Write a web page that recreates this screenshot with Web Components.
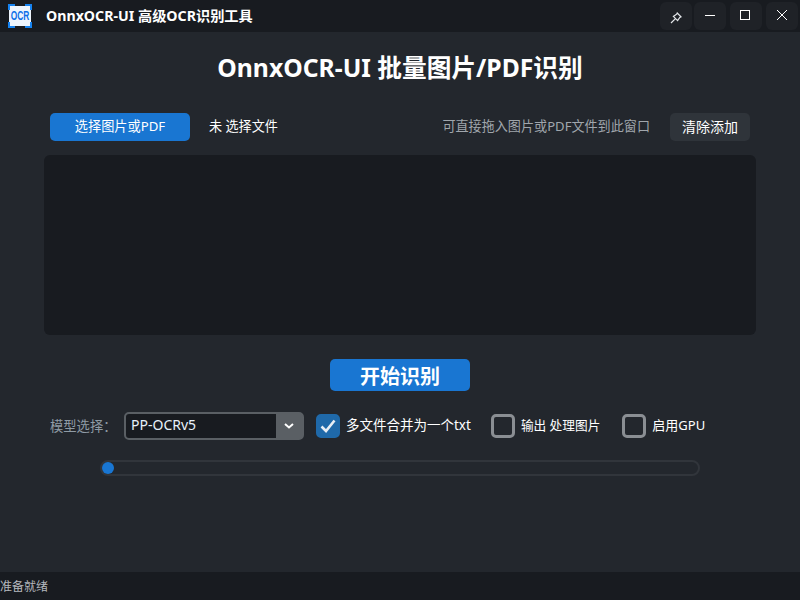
<!DOCTYPE html>
<html lang="zh">
<head>
<meta charset="utf-8">
<title>OnnxOCR-UI</title>
<style>
  html, body { margin: 0; height: 100%; }
  body {
    background: #23272d;
    color: #fff;
    font-family: "Noto Sans", "Noto Sans CJK SC", sans-serif;
    overflow: hidden;
  }
  ocr-app { height: 600px; }
</style>
</head>
<body>
<ocr-app></ocr-app>
<script>
class AppButton extends HTMLElement {
  constructor() {
    super();
    this.attachShadow({ mode: "open" }).innerHTML = `
      <style>
        :host { display: flex; align-items: center; justify-content: center; height: 28px; border-radius: 5px;
                box-sizing: border-box; padding-bottom: 4px; font-size: 13.2px; color: #fff; cursor: pointer; background: #1976d2; }
        :host([kind="flat"]) { background: #2f343a; font-size: 14px; padding-bottom: 3px; }
        :host([kind="big"]) { height: 32px; padding-bottom: 0; font-size: 20px; font-weight: 700; }
      </style>
      <slot></slot>`;
  }
}
customElements.define("app-button", AppButton);

class WinButton extends HTMLElement {
  constructor() {
    super();
    this.attachShadow({ mode: "open" }).innerHTML = `
      <style>
        :host { display: flex; align-items: center; justify-content: center; width: 32px; height: 28px;
                box-sizing: border-box; padding-bottom: 2px; border-radius: 6px; background: #1f2227; }
        ::slotted(svg) { display: block; }
      </style>
      <slot></slot>`;
  }
}
customElements.define("win-button", WinButton);

class TitleBar extends HTMLElement {
  constructor() {
    super();
    this.attachShadow({ mode: "open" }).innerHTML = `
      <style>
        :host { display: flex; align-items: center; height: 32px; background: #181b20; flex: none; }
        .logo { margin-left: 8px; width: 24px; height: 24px; flex: none; display: block; position: relative; }
        .logo-text { position: absolute; left: 1px; top: 2px; width: 22px; height: 20px; background: #eef5fd; color: #0f6fe8;
                     display: flex; align-items: center; justify-content: center; overflow: hidden; }
        .logo-text span { font: 700 13.5px/20px "Liberation Sans", sans-serif; transform: scaleX(.62); white-space: nowrap; }
        .logo svg { position: absolute; left: 0; top: 0; z-index: 1; }
        .name { margin-left: 14px; font-size: 14.2px; font-weight: 700; flex: 1; white-space: nowrap; line-height: 32px; }
        .btns { display: flex; gap: 4px; margin-right: 2px; }
        .btns win-button:first-child { margin-right: -2px; }
      </style>
      <div class="logo">
        <div class="logo-text"><span>OCR</span></div>
        <svg width="24" height="24" viewBox="0 0 24 24" fill="none" stroke="#1683f0" stroke-width="2">
          <path d="M1 6V1H7M17 1H23V6M23 18V23H17M7 23H1V18"/>
        </svg>
      </div>
      <div class="name">OnnxOCR-UI 高级OCR识别工具</div>
      <div class="btns">
        <win-button><svg style="margin-top:6px" width="12" height="12" viewBox="0 0 12 12" fill="none" stroke="#e4e7ea" stroke-width="1.2"><path d="M7.2 1 L11 4.8 L9.8 5.4 L7.6 8.6 L3.4 4.4 L6.6 2.2 Z M5.2 6.8 L1 11"/></svg></win-button>
        <win-button><svg width="10" height="1" viewBox="0 0 10 1"><rect width="10" height="1" fill="#fff"/></svg></win-button>
        <win-button><svg style="margin-right:2px" width="10" height="10" viewBox="0 0 10 10" fill="none" stroke="#fff"><rect x=".5" y=".5" width="9" height="9"/></svg></win-button>
        <win-button><svg width="10" height="10" viewBox="0 0 10 10" stroke="#fff" stroke-width="1"><path d="M0 0L10 10M10 0L0 10"/></svg></win-button>
      </div>`;
  }
}
customElements.define("title-bar", TitleBar);

class FileRow extends HTMLElement {
  constructor() {
    super();
    this.attachShadow({ mode: "open" }).innerHTML = `
      <style>
        :host { display: flex; align-items: center; padding: 0 6px; height: 28px; font-size: 13.1px; }
        .pick { width: 140px; }
        .none { margin: 0 0 4px 19px; flex: 1; }
        .hint { color: #a0a6ac; margin: 0 20px 4px 0; }
        .clear { width: 80px; }
      </style>
      <app-button class="pick">选择图片或PDF</app-button>
      <span class="none">未 选择文件</span>
      <span class="hint">可直接拖入图片或PDF文件到此窗口</span>
      <app-button class="clear" kind="flat">清除添加</app-button>`;
  }
}
customElements.define("file-row", FileRow);

class DropArea extends HTMLElement {
  constructor() {
    super();
    this.attachShadow({ mode: "open" }).innerHTML = `
      <style>
        :host { display: block; height: 180px; background: #181b20; border-radius: 6px; margin-top: 14px; }
      </style>`;
  }
}
customElements.define("drop-area", DropArea);

class ModelSelect extends HTMLElement {
  constructor() {
    super();
    this.attachShadow({ mode: "open" }).innerHTML = `
      <style>
        :host { display: flex; width: 180px; height: 28px; box-sizing: border-box; border: 2px solid #5a5f64;
                border-radius: 5px; background: #181b20; font-size: 14px; color: #e8f2fb; flex: none; }
        .val { flex: 1; padding-left: 5px; line-height: 22px; }
        .arrow { width: 26px; background: #5a5f64; display: flex; align-items: center; justify-content: center; }
      </style>
      <span class="val"><slot></slot></span>
      <span class="arrow">
        <svg width="10" height="6" viewBox="0 0 10 6" fill="none" stroke="#fff" stroke-width="2"><path d="M1 1L5 4.5L9 1"/></svg>
      </span>`;
  }
}
customElements.define("model-select", ModelSelect);

class CheckOption extends HTMLElement {
  constructor() {
    super();
    this.attachShadow({ mode: "open" }).innerHTML = `
      <style>
        :host { display: flex; align-items: center; gap: 6px; font-size: var(--check-size, 13.5px); white-space: nowrap; }
        .box { width: 24px; height: 24px; box-sizing: border-box; border: 3px solid #8a8e93; border-radius: 5px; flex: none;
               display: flex; align-items: center; justify-content: center; }
        .txt { margin-bottom: 4px; }
        svg { display: none; }
        :host([checked]) .box { background: #1f69a9; border-color: #1f69a9; }
        :host([checked]) svg { display: block; }
      </style>
      <span class="box">
        <svg width="16" height="14" viewBox="0 0 16 14" fill="none" stroke="#e8eef4" stroke-width="2.6"><path d="M1.5 7.5L6 12L14.5 1.5"/></svg>
      </span>
      <span class="txt"><slot></slot></span>`;
  }
}
customElements.define("check-option", CheckOption);

class ProgressTrack extends HTMLElement {
  constructor() {
    super();
    this.attachShadow({ mode: "open" }).innerHTML = `
      <style>
        :host { display: block; width: 600px; height: 16px; box-sizing: border-box; border: 2px solid #31353b;
                border-radius: 8px; margin: 20px auto 0; }
        .fill { width: 12px; height: 12px; border-radius: 50%; background: #1976d2; }
      </style>
      <div class="fill"></div>`;
  }
}
customElements.define("progress-track", ProgressTrack);

class StatusBar extends HTMLElement {
  constructor() {
    super();
    this.attachShadow({ mode: "open" }).innerHTML = `
      <style>
        :host { display: block; height: 28px; background: #181b20; color: #b4b8bd; font-size: 12px; line-height: 29px; flex: none; }
      </style>
      <slot></slot>`;
  }
}
customElements.define("status-bar", StatusBar);

class OcrApp extends HTMLElement {
  constructor() {
    super();
    this.attachShadow({ mode: "open" }).innerHTML = `
      <style>
        :host { display: flex; flex-direction: column; }
        main { flex: 1; display: flex; flex-direction: column; padding: 0 44px; }
        h1 { margin: 20px 0 0; height: 32px; font-size: 24.7px; line-height: 32px; font-weight: 700; text-align: center; }
        file-row { margin-top: 29px; }
        .start { width: 140px; margin: 24px auto 0; }
        .controls { display: flex; align-items: center; margin-top: 21px; padding-left: 6px; height: 28px; }
        .lbl { color: #8f9ba5; font-size: 13.3px; width: 74px; flex: none; white-space: nowrap; margin-bottom: 2px; }
        .controls check-option:nth-of-type(1) { margin-left: 12px; }
        .controls check-option:nth-of-type(2) { margin-left: 20px; --check-size: 12.7px; }
        .controls check-option:nth-of-type(3) { margin-left: 22px; --check-size: 13px; }
      </style>
      <title-bar></title-bar>
      <main>
        <h1>OnnxOCR-UI 批量图片/PDF识别</h1>
        <file-row></file-row>
        <drop-area></drop-area>
        <app-button class="start" kind="big">开始识别</app-button>
        <div class="controls">
          <span class="lbl">模型选择：</span>
          <model-select>PP-OCRv5</model-select>
          <check-option checked>多文件合并为一个txt</check-option>
          <check-option>输出 处理图片</check-option>
          <check-option>启用GPU</check-option>
        </div>
        <progress-track></progress-track>
      </main>
      <status-bar>准备就绪</status-bar>`;
  }
}
customElements.define("ocr-app", OcrApp);
</script>
</body>
</html>
